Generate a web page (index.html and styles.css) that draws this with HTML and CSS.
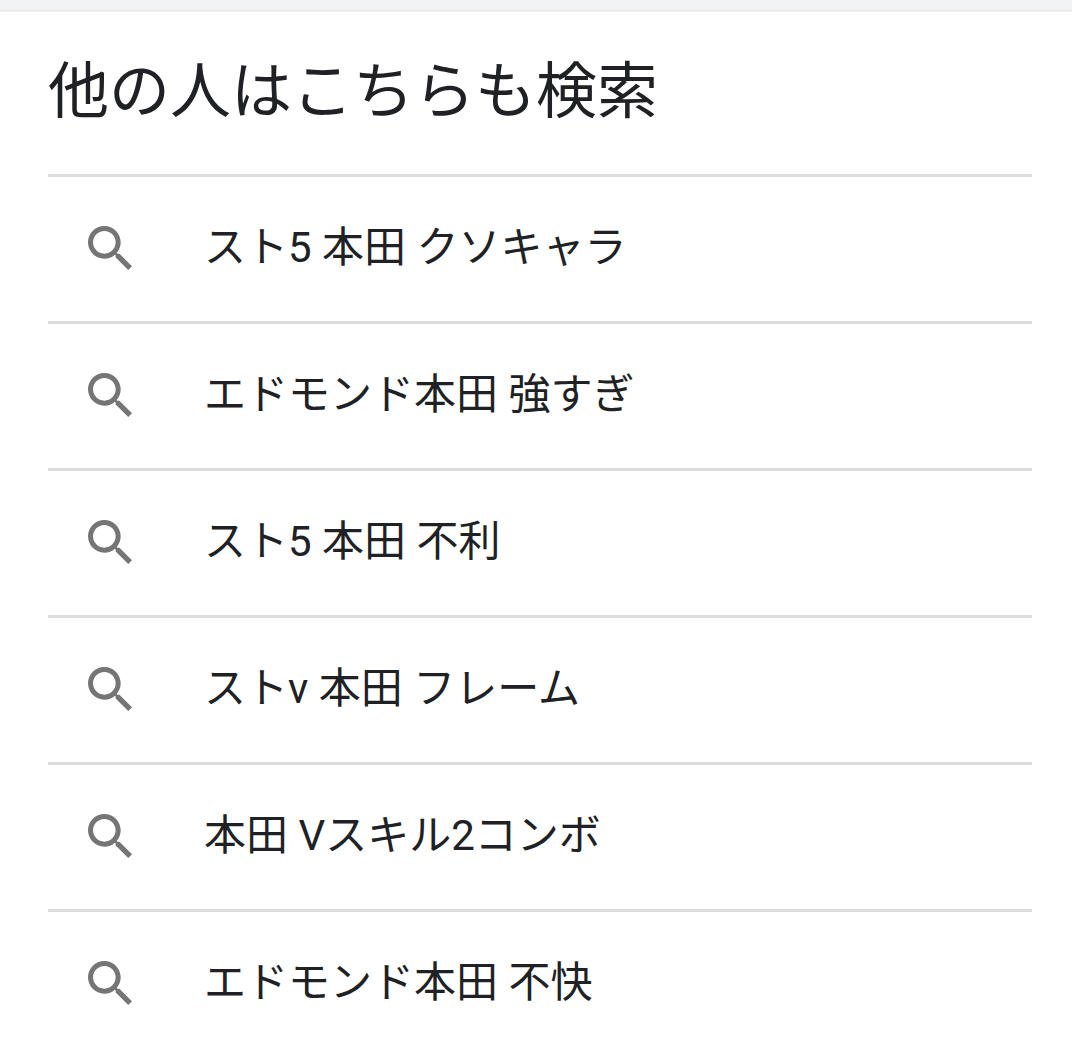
FILE: index.html
```html
<!DOCTYPE html>
<html lang="ja">
<head>
<meta charset="utf-8">
<meta name="viewport" content="width=device-width, initial-scale=1">
<title>他の人はこちらも検索</title>
<link rel="stylesheet" href="styles.css">
</head>
<body>
<svg class="sprite" aria-hidden="true">
  <symbol id="search" viewBox="3 3 17.5 17.5">
    <path fill="currentColor" d="M15.5 14h-.79l-.28-.27C15.41 12.59 16 11.11 16 9.500 16 5.910 13.090 3 9.500 3S3 5.910 3 9.500 5.910 16 9.500 16c1.610 0 3.090-.59 4.230-1.570l.27.28v.79l5 4.990L20.490 19l-4.990-5zm-6 0C7.010 14 5 11.990 5 9.500S7.010 5 9.500 5 14 7.010 14 9.500 11.990 14 9.500 14z"/>
  </symbol>
</svg>
<main class="related">
  <h2 class="title">他の人はこちらも検索</h2>
  <ul class="list">
    <li class="item"><a class="link" href="#"><svg class="icon" aria-hidden="true"><use href="#search"/></svg><span>スト5 本田 クソキャラ</span></a></li>
    <li class="item"><a class="link" href="#"><svg class="icon" aria-hidden="true"><use href="#search"/></svg><span>エドモンド本田 強すぎ</span></a></li>
    <li class="item"><a class="link" href="#"><svg class="icon" aria-hidden="true"><use href="#search"/></svg><span>スト5 本田 不利</span></a></li>
    <li class="item"><a class="link" href="#"><svg class="icon" aria-hidden="true"><use href="#search"/></svg><span>ストv 本田 フレーム</span></a></li>
    <li class="item"><a class="link" href="#"><svg class="icon" aria-hidden="true"><use href="#search"/></svg><span>本田 Vスキル2コンボ</span></a></li>
    <li class="item"><a class="link" href="#"><svg class="icon" aria-hidden="true"><use href="#search"/></svg><span>エドモンド本田 不快</span></a></li>
  </ul>
</main>
</body>
</html>
```
FILE: styles.css
```css
* {
  box-sizing: border-box;
}

body {
  margin: 0;
  border-top: 9px solid #f1f3f4;
  background: #fff;
  color: #202124;
  font-family: Roboto, "Noto Sans CJK JP", sans-serif;
}

.sprite {
  display: none;
}

.related {
  border-top: 3px solid #ebedef;
  padding: 0 40px 0 48px;
}

.title {
  margin: 0;
  padding: 34px 0 36px;
  font-size: 61px;
  font-weight: 400;
  line-height: 92px;
}

.list {
  margin: 0;
  padding: 0;
  list-style: none;
}

.item {
  border-top: 3px solid #dadcdd;
}

.link {
  display: flex;
  align-items: center;
  gap: 72px;
  min-height: 144px;
  padding: 0 0 2px 40px;
  color: inherit;
  font-size: 42px;
  line-height: 64px;
  text-decoration: none;
}

.icon {
  flex: none;
  width: 44px;
  height: 44px;
  color: #757575;
}
```
